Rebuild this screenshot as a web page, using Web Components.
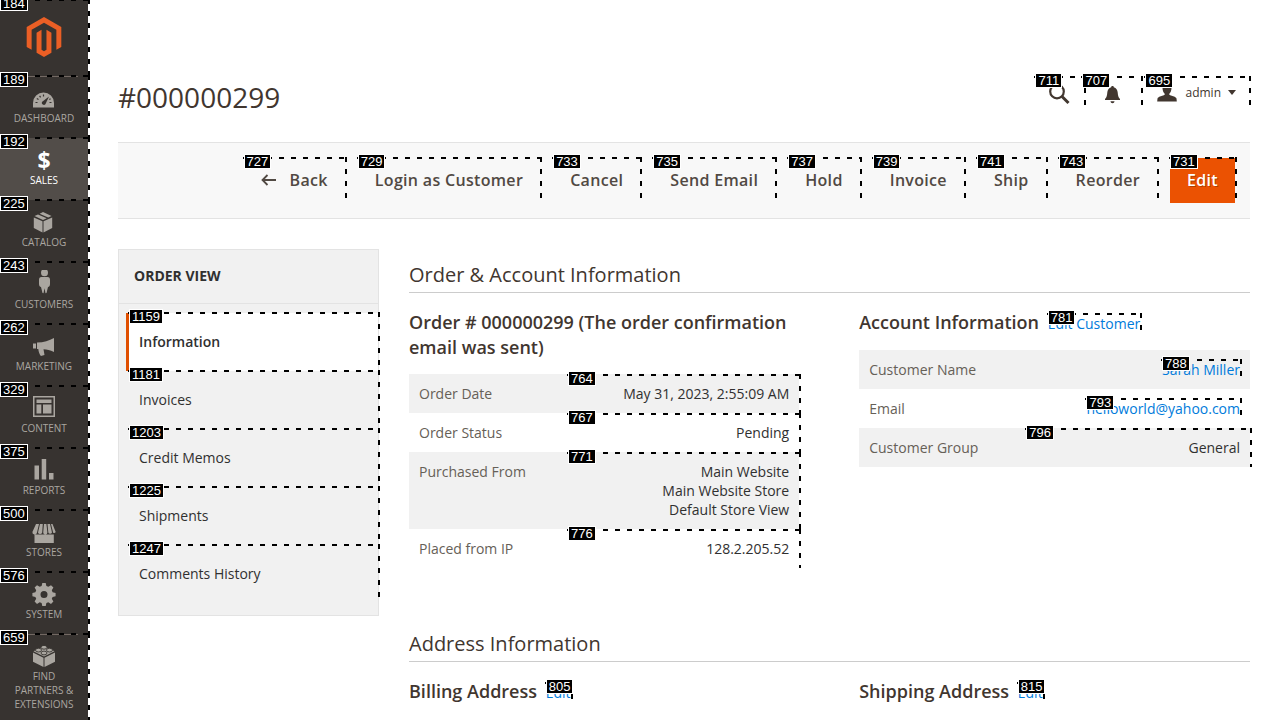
<!DOCTYPE html>
<html lang="en">
<head>
<meta charset="utf-8">
<title>#000000299 / Orders</title>
<style>
  body { margin: 0; font-family: "Open Sans", "Noto Sans", sans-serif; font-size: 14px; color: #41362f; background: #fff; }
</style>
</head>
<body>
<order-page></order-page>

<template id="mark-box">
  <style>
    :host { display: block; position: relative; }
    :host([inline]) { display: inline-block; }
    :host([cover]) { position: absolute; inset: 1px 0 0 0; }
    .dash { position: absolute; inset: -1px -2px 0 -1px; z-index: 2; pointer-events: none;
      background:
        repeating-linear-gradient(90deg, #000 0 5px, transparent 5px 12px) top left / 100% 2px no-repeat,
        repeating-linear-gradient(180deg, #000 0 5px, transparent 5px 12px) top right / 2px 100% no-repeat; }
    .tag { position: absolute; left: 0; top: -4px; z-index: 3; pointer-events: none; box-sizing: border-box; height: 15px; padding: 0 2px;
      border: 1px solid #fff; background: #000; color: #fff; text-shadow: none; text-align: left; letter-spacing: normal;
      font: 400 13px/13px "Liberation Sans", Arial, sans-serif; }
  </style>
  <slot></slot><span class="dash"></span><span class="tag"></span>
</template>

<template id="nav-item">
  <style>
    :host { display: block; }
    a { display: block; min-height: 62px; box-sizing: border-box; padding: 8px 8px 10px; text-align: center; text-decoration: none;
      font-size: 10px; line-height: 14px; color: #aaa6a0; text-transform: uppercase; }
    :host([active]) a { background: #524d49; color: #fff; }
    .rule { display: none; }
    :host([ruled]) .rule { display: block; position: absolute; left: 10px; right: 10px; top: 0; border-top: 1px solid #736963; }
    .icon { display: flex; justify-content: center; height: 26px; margin-bottom: 1px; font: 700 23px/28px "Open Sans", sans-serif; }
  </style>
  <mark-box><span class="rule"></span><a href="#"><span class="icon"><slot name="icon"></slot></span><slot></slot></a></mark-box>
</template>

<template id="app-sidebar">
  <style>
    :host { display: block; background: #373330; }
    .logo { display: flex; justify-content: center; height: 76px; box-sizing: border-box; padding-top: 17px; }
    svg { display: block; }
    nav svg { width: 24px; height: 26px; fill: #aaa6a0; }
  </style>
  <mark-box no="184"><a class="logo" href="#" aria-label="Admin home"><svg width="40" height="40" viewBox="0 0 24 24" fill="#eb5f25"><path d="M12 24l-4.455-2.572v-12l2.97-1.715v12.001l1.485.902 1.485-.902V7.713l2.971 1.715v12L12 24zM22.391 6v12l-2.969 1.714V7.713L12 3.43 4.574 7.713v12.001L1.609 18V6L12 0l10.391 6z"/></svg></a></mark-box>
  <nav>
    <nav-item no="189" ruled><svg slot="icon" viewBox="0 0 24 26"><path d="M1 23.500v-4.500a10.500 10.500 0 0 1 21 0v4.500z"/><path d="M17 12.500l-3.600 7.800a2.200 2.200 0 0 1-3.500-2.400z" fill="#373330"/><path d="M3.500 18.500h2M4.800 14.500l1.700 1M7.600 11.800l1 1.500M11.500 10.500v2M19.500 18.500h-2M18.600 14.800l-1.300.8" stroke="#373330" stroke-width="1.200"/></svg>Dashboard</nav-item>
    <nav-item no="192" active><span slot="icon" aria-hidden="true">$</span>Sales</nav-item>
    <nav-item no="225"><svg slot="icon" viewBox="0 0 24 26"><path d="M1.800 9.500l8.700 3.800v11.200l-8.700-4.500zM20.200 9.500l-8.700 3.800v11.200l8.700-4.500zM2.500 8l3.500-1.600 8.700 3.900-3.700 1.700zM7.600 5.700l3.400-1.600 8.500 3.900-3.300 1.600z"/></svg>Catalog</nav-item>
    <nav-item no="243"><svg slot="icon" viewBox="0 0 24 26"><circle cx="12.500" cy="2.700" r="3.500"/><path d="M9.500 7h6c1.800 0 2.500 1.200 2.500 3v4c0 2-1 2.800-2 3l-1.500 6-1 .2-1-5-1 5-1-.2-1.500-6c-1-.2-2-1-2-3v-4c0-1.800.7-3 2.500-3z"/></svg>Customers</nav-item>
    <nav-item no="262"><svg slot="icon" viewBox="0 0 24 26"><path d="M1 11.500h3v5H1zM5 10.500c7 0 12-2 17-4.500v14c-4-2-7-2.600-10.500-2.800l1 5.800-3.600 1c-1.600-2-2.300-4.400-2.600-7H5z"/></svg>Marketing</nav-item>
    <nav-item no="329"><svg slot="icon" viewBox="0 0 24 26"><path fill-rule="evenodd" d="M1 2h22v21H1zM2.500 3.500v18h19v-18zM4.500 5.500h15V9h-15zM4.500 10.500h4.800v9H4.500zM11 10.500h8.500v9H11z"/></svg>Content</nav-item>
    <nav-item no="375"><svg slot="icon" viewBox="0 0 24 26"><path d="M2.500 9.500h4.500v14H2.500zM9.700 3h4.500v20.500H9.700zM17 17h4.500v6.500H17z"/></svg>Reports</nav-item>
    <nav-item no="500"><svg slot="icon" viewBox="0 0 24 26"><path d="M4 6h3l-2 8.500a2.300 2.300 0 0 1-4.600-.5zM8 6h2.800l-.6 8.500a2.200 2.200 0 0 1-4.200 0zM12 6h2.400l1 8.500a2.100 2.100 0 0 1-4.200 0zM15.500 6H18l2 8.500a2 2 0 0 1-3.700 0zM19 6h1.500l3.200 8a1.900 1.900 0 0 1-2.500.8zM2.500 16.500h19.300V25H2.500z"/></svg>Stores</nav-item>
    <nav-item no="576"><svg slot="icon" viewBox="0 0 24 26"><path fill-rule="evenodd" d="M10.300 3h3.400l.7 3 1.900.8 2.700-1.600 2.400 2.400-1.600 2.700.8 1.900 3 .7v3.300l-3 .7-.8 1.900 1.600 2.700-2.400 2.400-2.700-1.600-1.900.8-.7 3h-3.400l-.7-3-1.900-.8L5 23.900l-2.400-2.400 1.600-2.700-.8-1.900-3-.7v-3.300l3-.7.8-1.900-1.600-2.700L5 5.200l2.700 1.600 1.900-.8zM12 11a3.500 3.500 0 1 0 0 7 3.500 3.500 0 0 0 0-7z"/></svg>System</nav-item>
    <nav-item no="659" ruled><svg slot="icon" viewBox="0 0 24 26"><path d="M1 10.500l10.500 5.300v9.200L1 19.800zM23 10.500l-10.500 5.300v9.200L23 19.800zM1.500 9.300L12 4.300l10.500 5L12 14.600z"/><g stroke="#373330" stroke-width=".9"><ellipse cx="12" cy="5.300" rx="3" ry="1.900"/><ellipse cx="6.500" cy="8.100" rx="3" ry="1.900"/><ellipse cx="17.500" cy="8.100" rx="3" ry="1.900"/><ellipse cx="12" cy="11" rx="3" ry="1.900"/></g></svg>Find Partners &amp; Extensions</nav-item>
  </nav>
</template>

<template id="page-header">
  <style>
    :host { display: flex; justify-content: space-between; align-items: flex-start; padding: 77px 1px 25px 0; }
    h1 { margin: 0; font-size: 28px; line-height: 40px; font-weight: 400; }
    .tools { display: flex; }
    button { display: flex; align-items: center; height: 32px; box-sizing: border-box; margin: 0; border: 0; padding: 0 13px; background: none; font: inherit; font-size: 12px; color: #41362f; }
    .search button { padding: 2px 14px 0; }
    .bell { margin-left: -2px; }
    .bell button { padding: 2px 21px 0 23px; }
    .user { margin-left: 4px; }
    .user button { height: 31px; padding: 0 13px 0 12px; }
    .user svg:first-child { margin-right: 8px; }
    .user svg:last-child { margin-left: 7px; }
  </style>
  <h1>#000000299</h1>
  <div class="tools">
    <mark-box class="search" no="711"><button aria-label="Search"><svg width="21" height="21" viewBox="0 0 21 21" fill="none" stroke="#41362f"><circle cx="8" cy="7.500" r="6.800" stroke-width="2.200"/><path d="M13 12.500l6.500 6.500" stroke-width="3"/></svg></button></mark-box>
    <mark-box class="bell" no="707"><button aria-label="Notifications"><svg width="15" height="19" viewBox="0 0 15 19" fill="#41362f"><path d="M7.500 1c.8 0 1.300.5 1.300 1.300 2.500.7 3.700 2.600 3.900 5.200.2 3 .6 4.800 2.300 6.500v1H0v-1c1.700-1.700 2.100-3.500 2.300-6.500.2-2.600 1.400-4.500 3.900-5.200C6.200 1.500 6.700 1 7.500 1zM5.500 16.300h4c0 1.200-1 1.900-2 1.900s-2-.7-2-1.900z"/></svg></button></mark-box>
    <mark-box class="user" no="695"><button><svg width="20" height="20" viewBox="0 0 20 20" fill="#41362f"><path d="M10 0c3 0 4.500 2 4.500 5 0 2.500-1 4.700-2.200 5.700v1c1 1 6.700 1.500 7.200 3.800l.3 3H.2L.5 15.500c.5-2.300 6.200-2.800 7.200-3.800v-1C6.500 9.700 5.500 7.500 5.500 5c0-3 1.500-5 4.500-5z"/></svg>admin<svg width="8" height="5" viewBox="0 0 8 5" fill="#41362f"><path d="M0 0h8L4 5z"/></svg></button></mark-box>
  </div>
</template>

<template id="action-bar">
  <style>
    :host { display: flex; justify-content: flex-end; gap: 13px; padding: 15px 15px; background: #f8f8f8; border: 1px solid #e3e3e3; border-width: 1px 0; }
    button { display: flex; align-items: center; height: 45px; box-sizing: border-box; margin: 0; border: 0; padding: 0 17px 2px; background: none; color: #514943;
      font: 600 16px/22px "Open Sans", sans-serif; letter-spacing: .02em; white-space: nowrap; }
    .primary { background: #eb5202; color: #fff; text-shadow: 1px 1px 0 rgba(0,0,0,.25); }
    svg { margin-right: 14px; }
  </style>
  <mark-box no="727"><button><svg width="15" height="12" viewBox="0 0 15 12" fill="none" stroke="#514943" stroke-width="1.800"><path d="M6.500 1l-5 5 5 5M1.500 6H15"/></svg>Back</button></mark-box>
  <mark-box no="729"><button>Login as Customer</button></mark-box>
  <mark-box no="733"><button>Cancel</button></mark-box>
  <mark-box no="735"><button>Send Email</button></mark-box>
  <mark-box no="737"><button>Hold</button></mark-box>
  <mark-box no="739"><button>Invoice</button></mark-box>
  <mark-box no="741"><button>Ship</button></mark-box>
  <mark-box no="743"><button>Reorder</button></mark-box>
  <mark-box no="731"><button class="primary">Edit</button></mark-box>
</template>

<template id="order-tabs">
  <style>
    :host { display: block; box-sizing: border-box; background: #f1f1f1; border: 1px solid #e3e3e3; color: #303030; }
    h2 { margin: 0; padding: 16px 15px 17px; border-bottom: 1px solid #e3e3e3; font-size: 14px; line-height: 20px; font-weight: 700; text-transform: uppercase; }
    ul { list-style: none; margin: 0; padding: 9px 0 12px 7px; }
    li { border-left: 3px solid transparent; }
    a { display: block; padding: 19px 10px; line-height: 20px; color: inherit; text-decoration: none; }
    .current { border-color: #e04f00; background: #fff; font-weight: 600; }
  </style>
  <h2>Order View</h2>
  <ul>
    <li class="current"><mark-box no="1159"><a href="#">Information</a></mark-box></li>
    <li><mark-box no="1181"><a href="#">Invoices</a></mark-box></li>
    <li><mark-box no="1203"><a href="#">Credit Memos</a></mark-box></li>
    <li><mark-box no="1225"><a href="#">Shipments</a></mark-box></li>
    <li><mark-box no="1247"><a href="#">Comments History</a></mark-box></li>
  </ul>
</template>

<template id="info-section">
  <style>
    :host { display: block; margin-bottom: 62px; }
    h2 { margin: 0 0 17px; padding-bottom: 3px; border-bottom: 1px solid #ccc; font-size: 20px; line-height: 28px; font-weight: 400; }
    .columns { display: grid; grid-template-columns: 46.4% minmax(0, 1fr); gap: 60px; }
  </style>
  <h2><slot name="heading"></slot></h2>
  <div class="columns"><slot></slot></div>
</template>

<template id="order-details">
  <style>
    :host { display: block; padding-top: 12px; }
    h3 { margin: 0 0 14px; font-size: 18px; line-height: 25px; font-weight: 600; }
    .account h3 { margin-bottom: 15px; }
    h3 mark-box { margin-left: 4px; font-size: 14px; line-height: 19px; font-weight: 400; }
    a { color: #007bdb; text-decoration: none; }
    table { width: 100%; border-collapse: collapse; line-height: 19px; }
    tr:nth-child(odd) { background: #f1f1f1; }
    th, td { padding: 10px; vertical-align: top; }
    th { width: 139px; text-align: left; font-weight: 400; color: #666057; }
    .account th { width: 147px; }
    td { position: relative; text-align: right; color: #303030; }
  </style>
  <info-section>
    <span slot="heading">Order &amp; Account Information</span>
    <div>
      <h3>Order # 000000299 (The order confirmation email was sent)</h3>
      <table>
        <tr><th scope="row">Order Date</th><td><mark-box cover no="764"></mark-box>May 31, 2023, 2:55:09 AM</td></tr>
        <tr><th scope="row">Order Status</th><td><mark-box cover no="767"></mark-box>Pending</td></tr>
        <tr><th scope="row">Purchased From</th><td><mark-box cover no="771"></mark-box>Main Website<br>Main Website Store<br>Default Store View</td></tr>
        <tr><th scope="row">Placed from IP</th><td><mark-box cover no="776"></mark-box>128.2.205.52</td></tr>
      </table>
    </div>
    <div class="account">
      <h3>Account Information <mark-box inline no="781"><a href="#">Edit Customer</a></mark-box></h3>
      <table>
        <tr><th scope="row">Customer Name</th><td><mark-box inline no="788"><a href="#">Sarah Miller</a></mark-box></td></tr>
        <tr><th scope="row">Email</th><td><mark-box inline no="793"><a href="#">helloworld@yahoo.com</a></mark-box></td></tr>
        <tr><th scope="row">Customer Group</th><td><mark-box cover no="796"></mark-box>General</td></tr>
      </table>
    </div>
  </info-section>
  <info-section>
    <span slot="heading">Address Information</span>
    <div><h3>Billing Address <mark-box inline no="805"><a href="#">Edit</a></mark-box></h3></div>
    <div><h3>Shipping Address <mark-box inline no="815"><a href="#">Edit</a></mark-box></h3></div>
  </info-section>
</template>

<template id="order-page">
  <style>
    :host { display: grid; grid-template-columns: 88px minmax(0, 1fr); height: 100vh; overflow: hidden; }
    main { padding: 0 30px; }
    .body { display: grid; grid-template-columns: 261px minmax(0, 1fr); gap: 30px; align-items: start; padding-top: 30px; }
  </style>
  <app-sidebar></app-sidebar>
  <main>
    <page-header></page-header>
    <action-bar></action-bar>
    <div class="body"><order-tabs></order-tabs><order-details></order-details></div>
  </main>
</template>

<script>
  class TemplateElement extends HTMLElement {
    constructor() {
      super();
      const template = document.getElementById(this.localName);
      this.attachShadow({ mode: "open" }).append(template.content.cloneNode(true));
    }
  }
  customElements.define("mark-box", class extends TemplateElement {
    static observedAttributes = ["no"];
    attributeChangedCallback(name, previous, value) {
      this.shadowRoot.querySelector(".tag").textContent = value;
    }
  });
  customElements.define("nav-item", class extends TemplateElement {
    connectedCallback() {
      this.shadowRoot.querySelector("mark-box").setAttribute("no", this.getAttribute("no"));
    }
  });
  for (const name of ["app-sidebar", "page-header", "action-bar", "order-tabs", "info-section", "order-details", "order-page"]) {
    customElements.define(name, class extends TemplateElement {});
  }
</script>
</body>
</html>
